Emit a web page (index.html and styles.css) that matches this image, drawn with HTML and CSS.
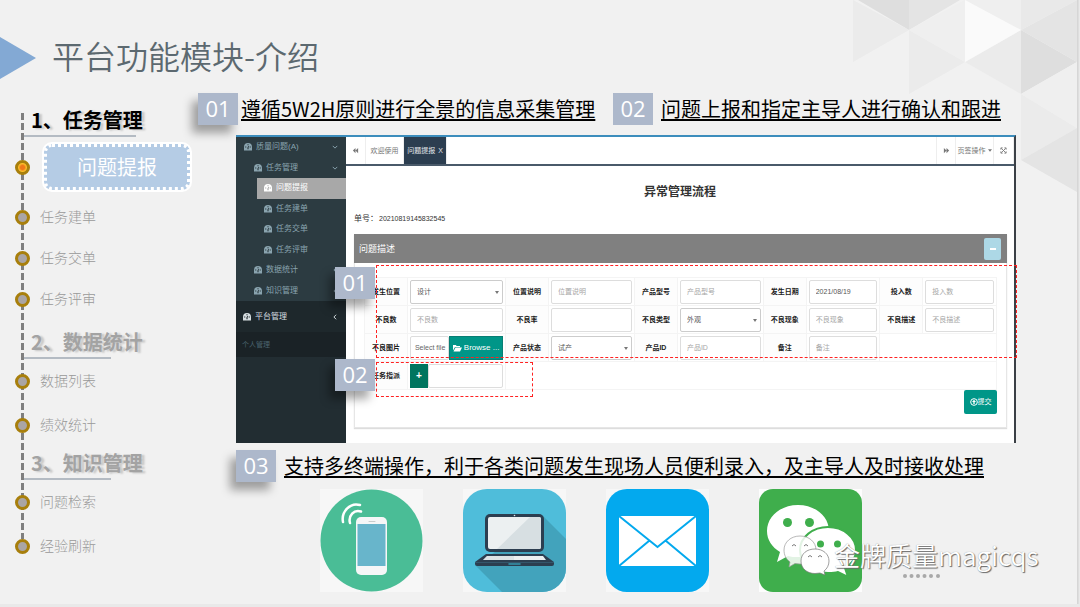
FILE: index.html
```html
<!DOCTYPE html>
<html lang="zh-CN">
<head>
<meta charset="utf-8">
<title>平台功能模块-介绍</title>
<link rel="stylesheet" href="styles.css">
</head>
<body>
<svg class="defs" width="0" height="0" aria-hidden="true">
  <symbol id="dash" viewBox="0 0 14 14"><path fill="currentColor" fill-rule="evenodd" d="M7 0a7 7 0 0 0-7 7v6h14V7a7 7 0 0 0-7-7zM6 2h2v2H6zM2 6h2v2H2zM10 6h2v2h-2zM8 5l1 .5L8 8v3H6V8z"/></symbol>
  <symbol id="down" viewBox="0 0 8 8"><path d="M1 2.500 4 5.500 7 2.500" fill="none" stroke="currentColor" stroke-width="1.300"/></symbol>
  <symbol id="left" viewBox="0 0 8 8"><path d="M5.500 1 2.500 4 5.500 7" fill="none" stroke="currentColor" stroke-width="1.300"/></symbol>
</svg>
<div class="slide">
  <svg class="facets" viewBox="0 0 224 192" aria-hidden="true">
    <path fill="#dedede" d="M5 0H56V30zM168 30 224 62 168 94z"/>
    <path fill="#ebebeb" d="M0 0 56 30 0 62zM56 30 112 62 56 94zM168 30 112 62 168 94zM168 94 224 128 168 160z"/>
    <path fill="#e4e4e4" d="M56 0H107L56 30zM224 0 168 30 224 62zM224 128 168 160 224 192z"/>
    <path fill="#efefef" d="M112 0 56 30 112 62zM112 0H168V30zM224 62 168 94 224 128z"/>
    <path fill="#fafafa" d="M112 0 168 30 112 62z"/>
    <path fill="#e9e9e9" d="M168 0H224L168 30z"/>
  </svg>
  <header class="top">
    <svg class="arrow" viewBox="0 0 36 42" aria-hidden="true"><path fill="#83a9d4" d="M0 0 36 21 0 42z"/></svg>
    <h1>平台功能模块-介绍</h1>
  </header>
  <div class="body">
    <nav class="timeline">
      <section class="group current">
        <h2>1、任务管理</h2>
        <ul>
          <li class="active"><span class="dot"></span><a href="#report">问题提报</a></li>
          <li><span class="dot"></span><a href="#create">任务建单</a></li>
          <li><span class="dot"></span><a href="#submit">任务交单</a></li>
          <li><span class="dot"></span><a href="#review">任务评审</a></li>
        </ul>
      </section>
      <section class="group">
        <h2>2、数据统计</h2>
        <ul>
          <li><span class="dot"></span><a href="#list">数据列表</a></li>
          <li><span class="dot"></span><a href="#stats">绩效统计</a></li>
        </ul>
      </section>
      <section class="group">
        <h2>3、知识管理</h2>
        <ul>
          <li><span class="dot"></span><a href="#search">问题检索</a></li>
          <li><span class="dot"></span><a href="#refresh">经验刷新</a></li>
        </ul>
      </section>
    </nav>
    <main>
      <div class="points">
        <p class="point tight"><span class="num">01</span><u>遵循5W2H原则进行全景的信息采集管理</u></p>
        <p class="point flat"><span class="num">02</span><u>问题上报和指定主导人进行确认和跟进</u></p>
      </div>
      <div class="app">
        <div class="side">
          <ul class="menu">
            <li class="l1"><svg class="ico"><use href="#dash"/></svg>质量问题(A)<svg class="chev"><use href="#down"/></svg></li>
            <li class="l2"><svg class="ico"><use href="#dash"/></svg>任务管理<svg class="chev"><use href="#down"/></svg></li>
            <li class="l3 on"><svg class="ico"><use href="#dash"/></svg>问题提报</li>
            <li class="l3"><svg class="ico"><use href="#dash"/></svg>任务建单</li>
            <li class="l3"><svg class="ico"><use href="#dash"/></svg>任务交单</li>
            <li class="l3"><svg class="ico"><use href="#dash"/></svg>任务评审</li>
            <li class="l2"><svg class="ico"><use href="#dash"/></svg>数据统计<svg class="chev"><use href="#left"/></svg></li>
            <li class="l2"><svg class="ico"><use href="#dash"/></svg>知识管理<svg class="chev"><use href="#left"/></svg></li>
          </ul>
          <div class="platform"><svg class="ico"><use href="#dash"/></svg>平台管理<svg class="chev"><use href="#left"/></svg></div>
          <div class="personal">个人管理</div>
        </div>
        <div class="work">
          <div class="tabs">
            <button class="tab square" aria-label="向左"><svg viewBox="0 0 8 8"><path fill="currentColor" d="M4 1v6L1 4zM7 1v6L4 4z"/></svg></button>
            <button class="tab home">欢迎使用</button>
            <button class="tab open">问题提报 <sup>X</sup></button>
            <span class="fill"></span>
            <button class="tab square edge" aria-label="向右"><svg viewBox="0 0 8 8"><path fill="currentColor" d="M1 1v6l3-3zM4 1v6l3-3z"/></svg></button>
            <button class="tab home">页签操作<svg class="caret" viewBox="0 0 6 4"><path fill="currentColor" d="M0 0h6L3 4z"/></svg></button>
            <button class="tab square" aria-label="全屏"><svg viewBox="0 0 8 8"><path fill="none" stroke="currentColor" d="M1.500 1.500l5 5M6.500 1.500l-5 5M1 3V1h2M5 1h2v2M7 5v2H5M3 7H1V5"/></svg></button>
          </div>
          <h3>异常管理流程</h3>
          <p class="serial"><b>单号：</b>20210819145832545</p>
          <form class="card">
            <div class="cardhead">问题描述<button type="button" class="fold" aria-label="收起"></button></div>
            <div class="cardbody">
              <table>
                <colgroup><col class="c43"><col class="c100"><col class="c43"><col class="c86"><col class="c43"><col class="c86"><col class="c43"><col class="c74"><col class="c43"><col class="c74"></colgroup>
                <tr>
                  <th><label for="f1">发生位置</label></th><td><span class="pick"><select id="f1"><option>设计</option></select></span></td>
                  <th><label for="f2">位置说明</label></th><td><input id="f2" placeholder="位置说明"></td>
                  <th><label for="f3">产品型号</label></th><td><input id="f3" placeholder="产品型号"></td>
                  <th><label for="f4">发生日期</label></th><td><input id="f4" value="2021/08/19"></td>
                  <th><label for="f5">投入数</label></th><td><input id="f5" placeholder="投入数"></td>
                </tr>
                <tr>
                  <th><label for="f6">不良数</label></th><td><input id="f6" placeholder="不良数"></td>
                  <th><label for="f7">不良率</label></th><td><input id="f7"></td>
                  <th><label for="f8">不良类型</label></th><td><span class="pick"><select id="f8"><option>外观</option></select></span></td>
                  <th><label for="f9">不良现象</label></th><td><input id="f9" placeholder="不良现象"></td>
                  <th><label for="f10">不良描述</label></th><td><input id="f10" placeholder="不良描述"></td>
                </tr>
                <tr>
                  <th><label for="f11">不良图片</label></th><td><span class="join"><input id="f11" class="file" placeholder="Select file"><button type="button" class="browse"><svg viewBox="0 0 18 14"><path fill="currentColor" d="M0 12V1h6l1 2h7v2H4zM5 6h13l-4 8H1z"/></svg>Browse ...</button></span></td>
                  <th><label for="f12">产品状态</label></th><td><span class="pick"><select id="f12"><option>试产</option></select></span></td>
                  <th><label for="f13">产品ID</label></th><td><input id="f13" placeholder="产品ID"></td>
                  <th><label for="f14">备注</label></th><td><input id="f14" placeholder="备注"></td>
                  <td colspan="2"></td>
                </tr>
                <tr>
                  <th><label for="f15">任务指派</label></th><td><span class="join"><button type="button" class="plus">+</button><input id="f15"></span></td>
                  <td colspan="8"></td>
                </tr>
              </table>
              <button type="button" class="send"><svg viewBox="0 0 12 12"><circle cx="6" cy="6" r="5" fill="none" stroke="currentColor" stroke-width="1.500"/><path fill="currentColor" d="M6 2.500 9 6H7v3H5V6H3z"/></svg>提交</button>
            </div>
          </form>
        </div>
        <div class="mark mark1"></div>
        <div class="mark mark2"></div>
        <span class="num pin1">01</span>
        <span class="num pin2">02</span>
      </div>
      <p class="point third"><span class="num">03</span><u>支持多终端操作，利于各类问题发生现场人员便利录入，及主导人及时接收处理</u></p>
      <div class="devices">
        <svg class="tile" viewBox="0 0 103 103" role="img" aria-label="手机">
          <path fill="#f7f7f7" d="M0 0h103v103H0z"/><circle cx="51.500" cy="51.500" r="51" fill="#4abd96"/>
          <rect x="36" y="28" width="31" height="58" rx="5" fill="#f5f6f7"/><path fill="#68b5cb" d="M37.500 35h28v42h-28z"/>
          <path d="M49 32.500h6" stroke="#c8cccc" stroke-linecap="round"/>
          <path d="M23 33C21 23 30 13 40 16M30 34C28 27 34 20 41 22.500" fill="none" stroke="#fff" stroke-width="2.500" stroke-linecap="round"/>
        </svg>
        <svg class="tile" viewBox="0 0 103 103" role="img" aria-label="笔记本电脑">
          <path fill="#f7f7f7" d="M0 0h103v103H0z"/><rect width="103" height="103" rx="24" fill="#4fbdda"/>
          <path fill="#42a3bc" d="M80 27 103 50V79a24 24 0 0 1-24 24H39L13 77z"/>
          <rect x="22" y="25" width="59" height="38" rx="5" fill="#2c3e50"/><rect x="25" y="28" width="53" height="32" rx="2" fill="#ecf0f1"/>
          <path fill="#d7dfe2" d="M67 28h9a2 2 0 0 1 2 2v28a2 2 0 0 1-2 2H34z"/><circle cx="51.500" cy="26.500" r=".8" fill="#dfe6e9"/>
          <path fill="#2c3e50" d="M23 65h57l11 8v2q0 2-2 2H14q-2 0-2-2v-2z"/><path fill="#34566b" d="M12 73h79v1H12z"/>
          <path fill="#ecf0f1" d="M24 67h56l3 4H20z"/><path fill="#c9d3d7" d="M24 67h27v4H20z" opacity=".4"/><path d="M46 75h11" stroke="#3596ad" stroke-width="1.500" stroke-linecap="round"/>
        </svg>
        <svg class="tile" viewBox="0 0 103 103" role="img" aria-label="邮件">
          <path fill="#f7f7f7" d="M0 0h103v103H0z"/><rect width="103" height="103" rx="21" fill="#03a9ee"/>
          <path fill="#fff" d="M13 27h77v50H13z"/><path d="M13 27 51.500 58 90 27M13 77 43.500 51.500M90 77 59.500 51.500" fill="none" stroke="#03a9ee" stroke-width="2"/>
        </svg>
        <svg class="tile wechat" viewBox="0 0 103 103" role="img" aria-label="微信">
          <path fill="#fdfdfd" d="M0 0h103v103H0z"/><rect width="103" height="103" rx="14" fill="#3fae4c"/>
          <path fill="#fff" d="M39 16c17 0 31 11 31 26S56 68 39 68c-4 0-7 0-10-1l-11 6 3-10C13 58 8 51 8 42 8 27 22 16 39 16z"/>
          <circle cx="28.500" cy="33.500" r="4.500" fill="#3fae4c"/><circle cx="50.500" cy="33.500" r="4.500" fill="#3fae4c"/>
          <path fill="#fff" stroke="#3fae4c" stroke-width="2" d="M69 38c15 0 28 10 28 23 0 8-4 14-11 18l3 9-10-5c-3 1-6 1-10 1-15 0-28-10-28-23s13-23 28-23z"/>
          <circle cx="61.500" cy="55" r="3.500" fill="#3fae4c"/><circle cx="78.500" cy="55" r="3.500" fill="#3fae4c"/>
        </svg>
        <div class="brand">
          <svg class="brandicon" viewBox="0 0 48 42" aria-hidden="true">
            <g fill="#fff" fill-opacity=".85" stroke="#999" stroke-width=".7">
              <path d="M18 2c9 0 16 6 16 14s-7 14-16 14l-5-.5L7 33l1-5C4 25 2 21 2 16 2 8 9 2 18 2z"/>
              <path fill-opacity="1" stroke="#777" d="M33 15c8 0 14 5 14 12 0 4-2 8-5 10l1 4-5-2-5 .500c-8 0-14-5-14-12.500S25 15 33 15z"/>
            </g>
            <path d="M10 12q2-3 4 0M22 12q2-3 4 0M26 23q2-3 4 0M36 23q2-3 4 0" fill="none" stroke="#777"/>
          </svg>
          <span>金牌质量magicqs</span>
        </div>
        <svg class="dots" viewBox="0 0 38 4" aria-hidden="true"><g fill="#a9a9a9"><circle cx="2" cy="2" r="2"/><circle cx="8.500" cy="2" r="2"/><circle cx="15" cy="2" r="2"/><circle cx="21.500" cy="2" r="2"/><circle cx="28" cy="2" r="2"/><circle cx="35" cy="2" r="2"/></g></svg>
      </div>
    </main>
  </div>
</div>
</body>
</html>
```

FILE: styles.css
```css
* { box-sizing: border-box; }
body {
  margin: 0;
  background: #e9e9e9;
  font-family: "Noto Sans CJK SC", sans-serif;
  color: #000;
}
h1, h2, h3, p, ul { margin: 0; padding: 0; font-weight: normal; }
ul { list-style: none; }
a { color: inherit; text-decoration: none; }
button, input, select { font: inherit; color: inherit; margin: 0; padding: 0; border: 0; border-radius: 0; }
.defs { position: absolute; }

.slide {
  position: relative;
  min-height: 604px;
  margin-right: 3px;
  background: #f1f1f1;
  box-shadow: 0 0 0 1px #d6d6d6, 0 0 0 2px #dedede;
}
.facets { position: absolute; top: 0; right: 0; width: 224px; height: 192px; }

.top { display: flex; align-items: flex-start; gap: 16px; padding-top: 34px; }
.arrow { width: 36px; height: 42px; margin-top: 3px; }
.top h1 { font-size: 32px; line-height: 42px; font-weight: 350; color: #5c6970; }

.body { position: relative; display: grid; grid-template-columns: 198px minmax(0, 1fr); padding-top: 14px; }

/* left timeline */
.timeline { position: relative; padding-top: 11px; }
.timeline::before {
  content: "";
  position: absolute;
  left: 21px;
  top: 20px;
  bottom: 64px;
  width: 3px;
  background: repeating-linear-gradient(#7f7f7f 0 7px, transparent 7px 10px);
}
.group h2 {
  width: 88px;
  height: 33px;
  margin-left: 23px;
  padding-left: 8px;
  border-bottom: 2px solid #b4bbc3;
  font-size: 20px;
  line-height: 32px;
  font-weight: bold;
  color: #a3a3a3;
  white-space: nowrap;
  text-shadow: 3px 1px 2px rgba(0, 0, 0, .18);
}
.current h2 { width: 113px; color: #000; }
.group li { position: relative; display: flex; align-items: center; gap: 10px; height: 44px; padding-left: 15px; font-size: 14px; line-height: 18px; font-weight: 300; color: #999; }
.group li a { padding-bottom: 3px; }
.current li { height: 41px; }
.current { padding-bottom: 4px; }
.dot { flex: none; width: 15px; height: 15px; border: 3px solid #a87f0c; border-radius: 50%; background: #aaa5a5; }
.current .active { height: 60px; gap: 14px; }
.active .dot { background: radial-gradient(#f07818 0 2px, #fcc02c 4px); }
.group .active a {
  flex: 0 0 146px;
  height: 46px;
  padding: 0;
  border: 3px dotted #fff;
  border-radius: 8px;
  outline: 2px solid #fff;
  background: #b5cce5;
  font-size: 20px;
  line-height: 40px;
  text-align: center;
  color: #fff;
  font-weight: 400;
}
.current ul { padding-bottom: 2px; }

/* numbered statements */
.num {
  flex: none;
  width: 40px;
  height: 32px;
  background: #adb8cb;
  color: #fff;
  font: 22px/30px "Open Sans", sans-serif;
  text-align: center;
  box-shadow: -6px 8px 10px rgba(0, 0, 0, .35);
}
.points { display: grid; grid-template-columns: 415px minmax(0, 1fr); }
.point { display: flex; align-items: center; gap: 8px; font-size: 20px; line-height: 32px; white-space: nowrap; }
.point u { text-underline-offset: 2px; text-decoration-thickness: 2px; }
.tight { gap: 3px; }
.flat .num { box-shadow: none; }
.third { margin: 7px 0 0 38px; }

/* application window */
.app {
  position: relative;
  display: grid;
  grid-template-columns: 110px minmax(0, 1fr);
  margin: 10px 61px 0 38px;
  border-top: 2px solid #3c8dbc;
  border-right: 2px solid #3b4046;
  background: #fff;
  font-family: "Liberation Sans", "Noto Sans CJK SC", sans-serif;
  font-size: 7px;
  line-height: 12px;
}
.side { background: #222d32; color: #8aa4af; font-size: 8px; }
.menu { display: grid; grid-template-rows: repeat(8, 1fr); height: 164px; background: #2c3b41; }
.menu li, .platform { display: flex; align-items: center; gap: 4px; padding-right: 8px; }
.ico { width: 8px; height: 8px; }
.chev { width: 6px; height: 6px; margin-left: auto; }
.l1 { padding-left: 8px; }
.l2 { padding-left: 18px; }
.l3 { padding-left: 28px; }
.menu .on { margin-left: 21px; padding-left: 7px; background: #a8a8a8; color: #fff; }
.platform { height: 31px; padding-left: 7px; background: #1e282c; color: #d5dde0; }
.personal { height: 25px; padding-left: 6px; background: #1a2226; color: #4b646f; line-height: 25px; font-size: 7px; }

.tabs { display: flex; height: 29px; border-bottom: 2px solid #4a5a6a; color: #777; }
.tab { display: flex; align-items: center; justify-content: center; width: 38px; background: #fff; border-right: 1px solid #eee; white-space: nowrap; }
.tab svg { width: 7px; height: 7px; }
.tab .caret { width: 4px; height: 3px; margin-left: 2px; }
.square { width: 20px; }
.edge { border-left: 1px solid #eee; }
.open { width: 43px; gap: 3px; background: #2c3e50; color: #e4e8ec; }
.open sup { font-size: 7px; line-height: 7px; }
.fill { flex: 1; }
.work h3 { padding-top: 17px; text-align: center; font-size: 12px; line-height: 18px; font-weight: bold; color: #333; }
.serial { display: flex; gap: 1px; padding: 12px 0 9px 8px; color: #333; }
.serial b { font-weight: normal; font-size: 8px; }

.card { margin: 0 7px 15px 8px; border: 1px solid #e6e6e6; border-top: 0; box-shadow: 0 1px 1px #ddd; }
.cardhead { display: flex; align-items: center; justify-content: space-between; height: 29px; margin: 0 -1px; padding: 0 6px 0 5px; background: #808080; color: #fff; font-size: 9px; }
.fold { display: grid; place-items: center; width: 17px; height: 22px; border-radius: 2px; background: #add8e6; }
.fold::after { content: ""; width: 6px; height: 2px; background: #fff; }
.cardbody { display: flow-root; padding: 14px 9px 13px; }
table { width: 100%; table-layout: fixed; border-collapse: collapse; }
.c43 { width: 7%; }
.c100 { width: 16%; }
.c86 { width: 14%; }
.c74 { width: 12%; }
th, td { height: 28px; padding: 0 2px; border: 1px solid #f4f4f4; color: #555; }
th { padding: 0; background: #fdfdfd; color: #222; font-weight: bold; text-align: center; white-space: nowrap; }
td input, select { display: block; width: 100%; min-width: 0; height: 24px; padding: 0 6px; border: 1px solid #ddd; border-radius: 2px; background: #fff; }
select { appearance: none; border-color: #ccc; }
input::placeholder { color: #a6a6a6; }
.pick { position: relative; display: block; }
.pick::after { content: ""; position: absolute; right: 4px; top: 11px; border: 2px solid transparent; border-top: 3px solid #777; }
.join { display: flex; }
.file::placeholder { color: #666; }
.join .file { padding: 0 0 0 4px; }
.browse { flex: 0 0 54px; display: flex; align-items: center; justify-content: center; gap: 2px; height: 24px; background: #009688; border: 1px solid #087e74; color: #fff; font-size: 8px; white-space: nowrap; }
.browse svg { width: 9px; height: 8px; }
.plus { flex: 0 0 18px; height: 24px; background: #00755f; color: #fff; font-size: 10px; font-weight: bold; }
.send { float: right; display: flex; align-items: center; justify-content: center; width: 33px; height: 24px; border-radius: 2px; background: #009688; color: #fff; font-size: 7px; }
.send svg { width: 8px; height: 8px; }

/* callouts laid over the window */
.mark { position: absolute; border: 1px dashed #f22; }
.mark1 { left: 140px; right: -3px; top: 128px; height: 93px; }
.mark2 { left: 140px; width: 157px; top: 225px; height: 35px; }
.pin1, .pin2 { position: absolute; left: 99px; }
.pin1 { top: 130px; }
.pin2 { top: 222px; }

/* device tiles */
.devices { position: relative; display: flex; gap: 40px; padding: 7px 0 11px 122px; }
.tile { width: 103px; height: 103px; }
.wechat { margin-left: 10px; }
.brand { position: absolute; left: 584px; top: 52px; display: flex; align-items: center; font-size: 26px; line-height: 38px; font-weight: 350; color: #fff; white-space: nowrap; text-shadow: 1px 1px 1px #666, 0 0 1px #999; }
.brandicon { width: 48px; height: 42px; margin-right: 4px; }
.dots { position: absolute; left: 705px; top: 92px; width: 38px; height: 4px; }
```
